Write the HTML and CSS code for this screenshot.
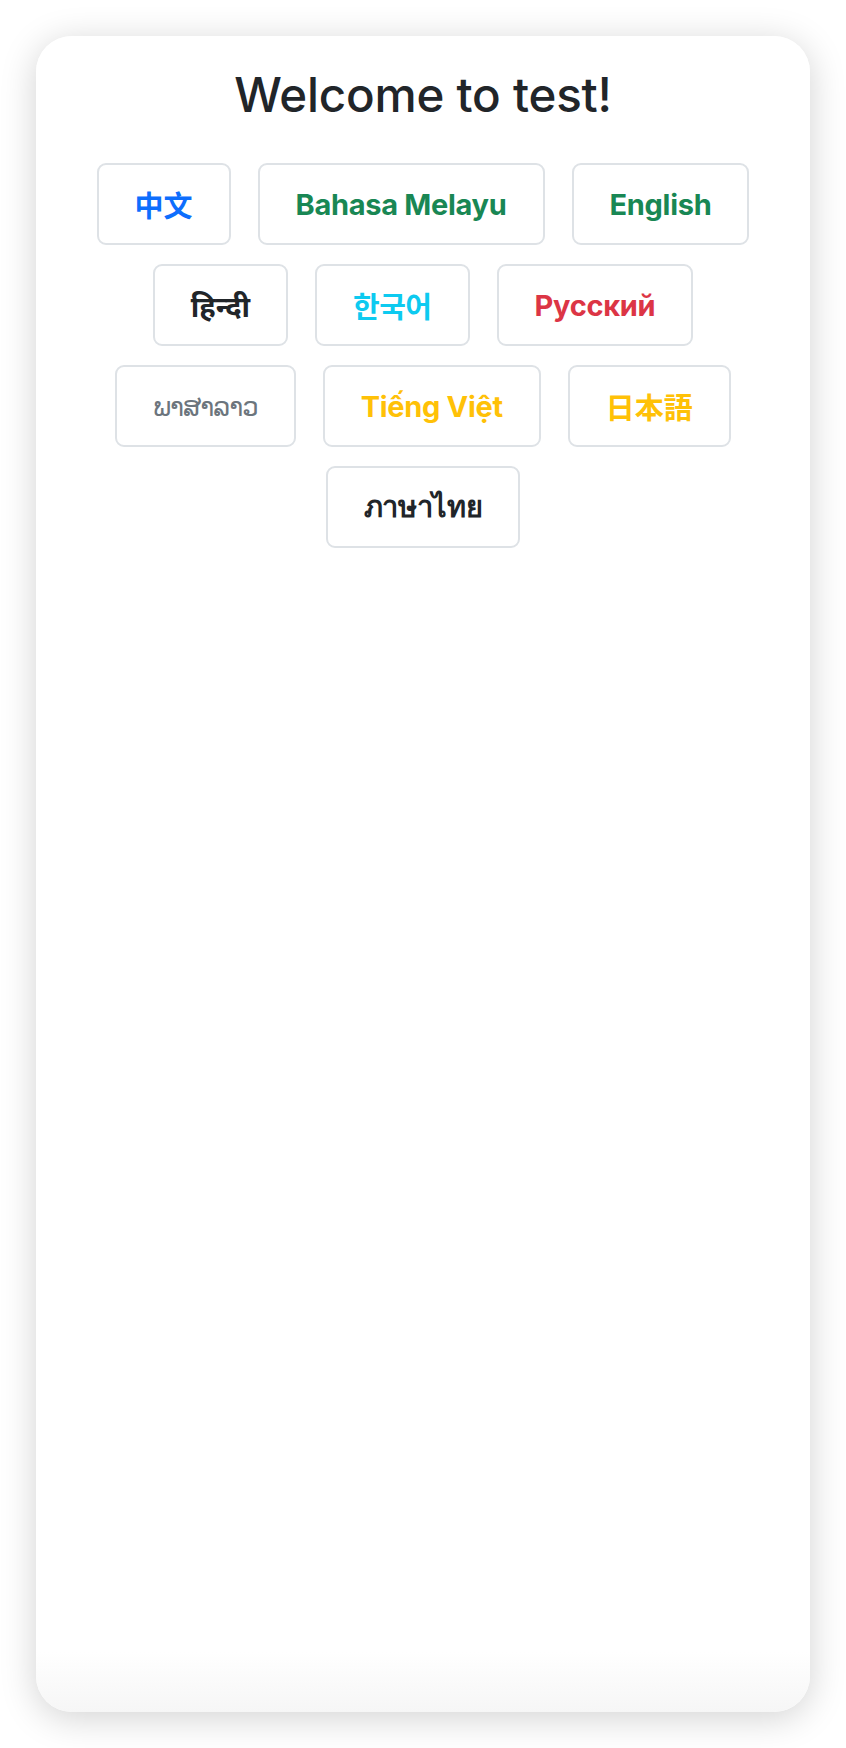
FILE: index.html
```html
<!DOCTYPE html>
<html lang="en">
<head>
<meta charset="UTF-8" />
<meta name="viewport" content="width=device-width, initial-scale=1" />
<title>Welcome</title>
<link rel="stylesheet" href="styles.css">
</head>
<body>
<div class="page">
    <div class="card">
        <h1 class="title">Welcome to test!</h1>
        <div class="lang-list">
            <button class="lang-btn primary" lang="zh">中文</button>
            <button class="lang-btn success" lang="ms">Bahasa Melayu</button>
            <button class="lang-btn success" lang="en">English</button>
            <button class="lang-btn dark" lang="hi">हिन्दी</button>
            <button class="lang-btn info" lang="ko">한국어</button>
            <button class="lang-btn danger" lang="ru">Русский</button>
            <button class="lang-btn secondary" lang="lo">ພາສາລາວ</button>
            <button class="lang-btn warning" lang="vi">Tiếng Việt</button>
            <button class="lang-btn warning" lang="ja">日本語</button>
            <button class="lang-btn dark" lang="th">ภาษาไทย</button>
        </div>
    </div>
</div>
</body>
</html>
```

FILE: styles.css
```css
* {
    box-sizing: border-box;
}
html, body {
    margin: 0;
    height: 100%;
    background: #fff;
    font-family: Inter, "Noto Sans", "DejaVu Sans", "Noto Sans CJK SC", sans-serif;
    color: #212529;
}
.page {
    height: 100%;
    padding: 36px;
}
.card {
    height: 100%;
    border-radius: 36px;
    padding: 30px 36px;
    background: linear-gradient(to bottom, #fff calc(100% - 60px), #f6f6f6);
    box-shadow: 0 6px 36px rgba(0, 0, 0, 0.18);
}
.title {
    margin: 0 0 40px;
    text-align: center;
    font-size: 47.5px;
    font-weight: 500;
    line-height: 1.2;
    letter-spacing: -0.2px;
    color: #212529;
}
.lang-list {
    display: flex;
    flex-wrap: wrap;
    justify-content: center;
    gap: 19px 27px;
}
.lang-btn {
    height: 82px;
    padding: 0 36px;
    background: #fff;
    border: 2px solid #dee2e6;
    border-radius: 9px;
    font-family: Inter, "Noto Sans", "DejaVu Sans", "Noto Sans CJK SC", sans-serif;
    font-size: 29px;
    font-weight: 700;
    letter-spacing: -0.3px;
    cursor: pointer;
}
.lang-btn[lang="zh"] {
    font-family: "Noto Sans CJK SC", sans-serif;
    letter-spacing: 0;
}
.lang-btn[lang="ja"] {
    font-family: "Noto Sans CJK JP", sans-serif;
    letter-spacing: 0;
}
.lang-btn[lang="ko"] {
    font-family: "Noto Sans CJK KR", sans-serif;
    letter-spacing: -0.5px;
}
.lang-btn[lang="hi"] {
    letter-spacing: 0;
}
.lang-btn[lang="lo"] {
    font-size: 26px;
    font-weight: 400;
    letter-spacing: -1px;
}
.primary { color: #0d6efd; }
.success { color: #198754; }
.dark { color: #212529; }
.info { color: #0dcaf0; }
.danger { color: #dc3545; }
.secondary { color: #6c757d; }
.warning { color: #ffc107; }
```
